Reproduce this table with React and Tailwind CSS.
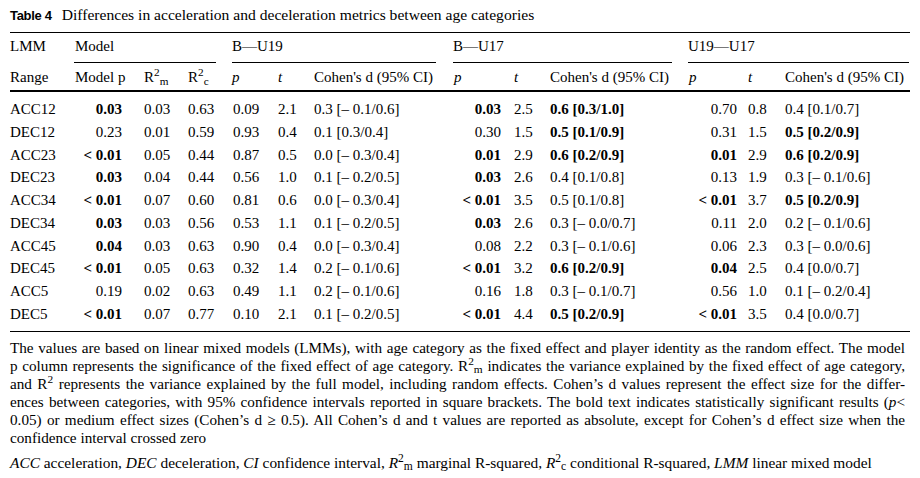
import React from "react";

const B = (s) => ({ b: true, s });

const rows = [
  ["ACC12", B("0.03"), "0.03", "0.63", "0.09", "2.1", "0.3 [– 0.1/0.6]", B("0.03"), "2.5", B("0.6 [0.3/1.0]"), "0.70", "0.8", "0.4 [0.1/0.7]"],
  ["DEC12", "0.23", "0.01", "0.59", "0.93", "0.4", "0.1 [0.3/0.4]", "0.30", "1.5", B("0.5 [0.1/0.9]"), "0.31", "1.5", B("0.5 [0.2/0.9]")],
  ["ACC23", B("< 0.01"), "0.05", "0.44", "0.87", "0.5", "0.0 [– 0.3/0.4]", B("0.01"), "2.9", B("0.6 [0.2/0.9]"), B("0.01"), "2.9", B("0.6 [0.2/0.9]")],
  ["DEC23", B("0.03"), "0.04", "0.44", "0.56", "1.0", "0.1 [– 0.2/0.5]", B("0.03"), "2.6", "0.4 [0.1/0.8]", "0.13", "1.9", "0.3 [– 0.1/0.6]"],
  ["ACC34", B("< 0.01"), "0.07", "0.60", "0.81", "0.6", "0.0 [– 0.3/0.4]", B("< 0.01"), "3.5", "0.5 [0.1/0.8]", B("< 0.01"), "3.7", B("0.5 [0.2/0.9]")],
  ["DEC34", B("0.03"), "0.03", "0.56", "0.53", "1.1", "0.1 [– 0.2/0.5]", B("0.03"), "2.6", "0.3 [– 0.0/0.7]", "0.11", "2.0", "0.2 [– 0.1/0.6]"],
  ["ACC45", B("0.04"), "0.03", "0.63", "0.90", "0.4", "0.0 [– 0.3/0.4]", "0.08", "2.2", "0.3 [– 0.1/0.6]", "0.06", "2.3", "0.3 [– 0.0/0.6]"],
  ["DEC45", B("< 0.01"), "0.05", "0.63", "0.32", "1.4", "0.2 [– 0.1/0.6]", B("< 0.01"), "3.2", B("0.6 [0.2/0.9]"), B("0.04"), "2.5", "0.4 [0.0/0.7]"],
  ["ACC5", "0.19", "0.02", "0.63", "0.49", "1.1", "0.2 [– 0.1/0.6]", "0.16", "1.8", "0.3 [– 0.1/0.7]", "0.56", "1.0", "0.1 [– 0.2/0.4]"],
  ["DEC5", B("< 0.01"), "0.07", "0.77", "0.10", "2.1", "0.1 [– 0.2/0.5]", B("< 0.01"), "4.4", B("0.5 [0.2/0.9]"), B("< 0.01"), "3.5", "0.4 [0.0/0.7]"],
];

const cellCls = [
  "",
  "text-right pr-[22px]",
  "",
  "",
  "pl-[1px]",
  "",
  "",
  "text-right pr-[12px]",
  "pl-[1px]",
  "",
  "text-right pr-[11px]",
  "",
  "",
];

const GRID =
  "grid grid-cols-[65px_69px_44px_44px_46px_36px_139px_60px_37px_138px_60px_37px_124px]";

function Cell({ v, i }) {
  const bold = typeof v === "object";
  const s = bold ? v.s : v;
  return (
    <div className={`whitespace-nowrap ${cellCls[i]} ${bold ? "font-bold" : ""}`}>{s}</div>
  );
}

function Line({ children, last }) {
  return (
    <div
      className={
        last
          ? "whitespace-nowrap"
          : "text-justify [text-align-last:justify] whitespace-nowrap"
      }
    >
      {children}
    </div>
  );
}

export default function App() {
  return (
    <div className="w-[920px] h-[478px] bg-white text-black px-[10px] overflow-hidden">
      <div className="font-['Liberation_Serif',serif] text-[15px]">
        {/* Title */}
        <div className="pt-[5px] h-[32px] flex items-baseline gap-[10px] leading-[20px] whitespace-nowrap">
          <span className="font-['Liberation_Sans',Arial,sans-serif] font-bold text-[13px] tracking-[-0.3px]">
            Table 4
          </span>
          <span className="text-[15.6px]">
            Differences in acceleration and deceleration metrics between age categories
          </span>
        </div>
        <div className="h-px bg-black"></div>

        {/* Header row 1 */}
        <div className={`${GRID} h-[30px]`}>
          <div className="pt-[3px] leading-[20px]">LMM</div>
          <div className="col-span-3 pr-[16px] -ml-px">
            <div className="h-full pt-[3px] pl-px leading-[20px] border-b border-black box-border">Model</div>
          </div>
          <div className="col-span-3 pr-[17px]">
            <div className="h-full pt-[3px] leading-[20px] border-b border-black box-border">B—U19</div>
          </div>
          <div className="col-span-3 pr-[16px]">
            <div className="h-full pt-[3px] leading-[20px] border-b border-black box-border">B—U17</div>
          </div>
          <div className="col-span-3">
            <div className="h-full pt-[3px] leading-[20px] border-b border-black box-border">U19—U17</div>
          </div>
        </div>

        {/* Header row 2 */}
        <div className={`${GRID} h-[27px] pt-[4px] leading-[20px] whitespace-nowrap`}>
          <div>Range</div>
          <div>Model p</div>
          <div>
            R<sup>2</sup>
            <sub>m</sub>
          </div>
          <div>
            R<sup>2</sup>
            <sub>c</sub>
          </div>
          <div className="italic">p</div>
          <div className="italic">t</div>
          <div>Cohen's d (95% CI)</div>
          <div className="italic pl-px">p</div>
          <div className="italic pl-px">t</div>
          <div>Cohen's d (95% CI)</div>
          <div className="italic pl-px">p</div>
          <div className="italic">t</div>
          <div>Cohen's d (95% CI)</div>
        </div>
        <div className="h-[2px] bg-black"></div>

        {/* Body */}
        <div className="pt-[6px] pb-[5px]">
          {rows.map((r, ri) => (
            <div key={ri} className={`${GRID} h-[22.75px] leading-[22.75px]`}>
              {r.map((v, i) => (
                <Cell key={i} v={v} i={i} />
              ))}
            </div>
          ))}
        </div>
        <div className="h-px bg-black"></div>

        {/* Footnotes */}
        <div className="mt-[7px] leading-[18px] pr-[5px] text-[15.2px]">
          <Line>
            The values are based on linear mixed models (LMMs), with age category as the fixed effect and player identity as the random effect. The model
          </Line>
          <Line>
            p column represents the significance of the fixed effect of age category. R<sup>2</sup>
            <sub>m</sub> indicates the variance explained by the fixed effect of age category,
          </Line>
          <Line>
            and R<sup>2</sup> represents the variance explained by the full model, including random effects. Cohen’s d values represent the effect size for the differ-
          </Line>
          <Line>
            ences between categories, with 95% confidence intervals reported in square brackets. The bold text indicates statistically significant results (<i>p</i>&lt;
          </Line>
          <Line>
            0.05) or medium effect sizes (Cohen’s d ≥ 0.5). All Cohen’s d and t values are reported as absolute, except for Cohen’s d effect size when the
          </Line>
          <Line last>confidence interval crossed zero</Line>
          <div className="mt-[7px] whitespace-nowrap text-[15.4px]">
            <i>ACC</i> acceleration, <i>DEC</i> deceleration, <i>CI</i> confidence interval,{" "}
            <i>R</i>
            <sup>2</sup>
            <sub>m</sub> marginal R-squared, <i>R</i>
            <sup>2</sup>
            <sub>c</sub> conditional R-squared, <i>LMM</i> linear mixed model
          </div>
        </div>
      </div>
    </div>
  );
}
